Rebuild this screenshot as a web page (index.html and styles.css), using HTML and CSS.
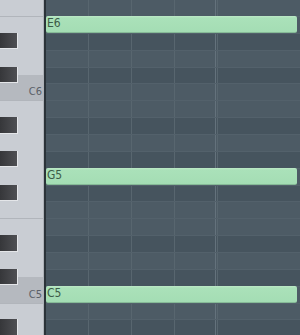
FILE: index.html
```html
<!DOCTYPE html>
<html lang="en">
<head>
    <meta charset="UTF-8">
    <title>Piano roll</title>
    <link rel="stylesheet" href="styles.css">
</head>
<body>
<div class="roll">
    <div class="keys">
        <div class="key"></div>
        <div class="key line"></div>
        <div class="key"><span class="black"></span></div>
        <div class="key"></div>
        <div class="key cs"><span class="black"></span></div>
        <div class="key c"><span class="label">C6</span></div>
        <div class="key line"></div>
        <div class="key"><span class="black"></span></div>
        <div class="key"></div>
        <div class="key"><span class="black"></span></div>
        <div class="key"></div>
        <div class="key"><span class="black"></span></div>
        <div class="key"></div>
        <div class="key line"></div>
        <div class="key"><span class="black"></span></div>
        <div class="key"></div>
        <div class="key cs"><span class="black"></span></div>
        <div class="key c"><span class="label">C5</span></div>
        <div class="key line"></div>
        <div class="key"><span class="black"></span></div>
    </div>
    <div class="edge"></div>
    <div class="grid">
        <div class="row"></div>
        <div class="row"><div class="note">E6</div></div>
        <div class="row dark"></div>
        <div class="row"></div>
        <div class="row dark"></div>
        <div class="row"></div>
        <div class="row"></div>
        <div class="row dark"></div>
        <div class="row"></div>
        <div class="row dark"></div>
        <div class="row"><div class="note">G5</div></div>
        <div class="row dark"></div>
        <div class="row"></div>
        <div class="row"></div>
        <div class="row dark"></div>
        <div class="row"></div>
        <div class="row dark"></div>
        <div class="row"><div class="note">C5</div></div>
        <div class="row"></div>
        <div class="row dark"></div>
    </div>
</div>
</body>
</html>
```

FILE: styles.css
```css
*{
    margin: 0;
    padding: 0;
    box-sizing: border-box;
}

body{
    width: 300px;
    height: 335px;
    overflow: hidden;
    background-color: #4b5963;
    font-family: "DejaVu Sans Condensed", "Liberation Sans", sans-serif;
}

.roll{
    display: flex;
    margin-top: -0.86px;
}

/* keyboard */
.keys{
    width: 44px;
    background-color: #c9cdd3;
    border-right: 1px solid #aeb2b8;
}

.key{
    height: 16.86px;
    display: flex;
    align-items: center;
    justify-content: flex-end;
    position: relative;
}

.key.line{
    border-top: 1px solid #b1b5bb;
}

.key.c{
    background-color: #b5b9bf;
}

.key.cs{
    background: linear-gradient(to bottom, #c9cdd3 50%, #b5b9bf 50%);
}

.black{
    position: absolute;
    left: 0;
    top: 0;
    width: 18px;
    height: 16.5px;
    background: linear-gradient(to right, #36373a, #4e4f53);
    border-right: 1px solid #e4e6e9;
    border-bottom: 1px solid #e4e6e9;
}

.label{
    font-size: 11px;
    color: #5b6068;
    padding-right: 1px;
}

.edge{
    width: 2px;
    background-color: #2b3339;
}

/* grid */
.grid{
    flex: 1;
}

.row{
    height: 16.86px;
    background-color: #4d5b65;
    background-image:
        linear-gradient(to bottom, #53616b 1px, transparent 1px),
        repeating-linear-gradient(to right, transparent 0 168.6px, #64727c 168.6px 170px),
        repeating-linear-gradient(to right, transparent 0 41.9px, #58666f 41.9px 42.9px);
    display: flex;
}

.row.dark{
    background-color: #46545e;
}

.note{
    width: 251px;
    height: 16.5px;
    margin-top: 0.3px;
    border-radius: 2px;
    background: linear-gradient(to bottom, #bde9c7 0, #aae1b9 2px, #a4ddb4 100%);
    border-bottom: 1px solid #86ba97;
    color: #3d5c48;
    font-size: 12px;
    line-height: 15px;
    padding-left: 1px;
}
```
